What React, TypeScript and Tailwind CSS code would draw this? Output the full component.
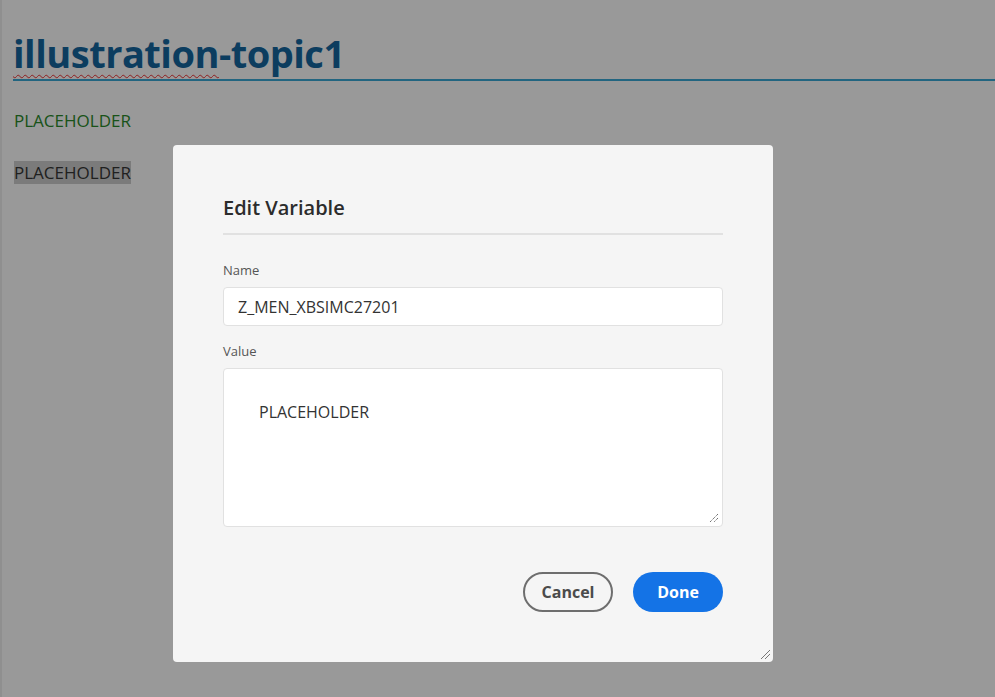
import React from 'react'

export default function App() {
  return (
    <div className="relative h-[697px] w-[995px] overflow-hidden bg-white font-['Open_Sans',sans-serif]">
      {/* document behind the dialog */}
      <div className="h-full border-l-2 border-[#eeeeee] pl-[11px] pt-[29px]">
        <h1 className="border-b-2 border-[#3aa9d6] pb-[2px] text-[38px] font-bold leading-[48px] tracking-[-0.5px] text-[#14679f]">
          <span className="underline decoration-[#e33] decoration-wavy decoration-1 underline-offset-[6px]">illustration</span>-topic1
        </h1>
        <p className="ml-[1px] mt-[28px] text-[17px] leading-[24px] text-[#2b8a2b]">PLACEHOLDER</p>
        <p className="ml-[1px] mt-[28px] text-[17px] leading-[24px] text-[#363636]">
          <span className="bg-[#cdcdcd]">PLACEHOLDER</span>
        </p>
      </div>

      {/* overlay */}
      <div className="absolute inset-0 bg-black/40" />

      {/* dialog */}
      <div className="absolute left-[173px] top-[145px] flex h-[517px] w-[600px] flex-col rounded-[4px] bg-[#f5f5f5] px-[50px] pt-[50px] font-['Open_Sans',sans-serif]">
        <h2 className="border-b-2 border-[#e1e1e1] pb-[12px] text-[20px] font-semibold leading-[26px] text-[#2c2c2c]">Edit Variable</h2>
        <label className="mt-[26px] text-[13px] leading-[18px] text-[#555]">Name</label>
        <div className="mt-[8px] flex h-[39px] items-center rounded-[4px] border border-[#e1e1e1] bg-white px-[14px] text-[16px] text-[#333]">
          Z_MEN_XBSIMC27201
        </div>
        <label className="mt-[16px] text-[13px] leading-[18px] text-[#555]">Value</label>
        <div className="relative mt-[8px] h-[159px] rounded-[4px] border border-[#e1e1e1] bg-white px-[35px] pt-[32px] text-[16px] leading-[22px] text-[#333]">
          PLACEHOLDER
          <svg className="absolute bottom-[3px] right-[3px]" width="10" height="10" viewBox="0 0 10 10">
            <path d="M9 1 L1 9 M9 5 L5 9" stroke="#555" strokeWidth="1" strokeDasharray="1.2 0.8" />
          </svg>
        </div>
        <div className="mt-[45px] flex justify-end gap-[20px]">
          <button className="h-[40px] w-[90px] rounded-full border-2 border-[#6e6e6e] text-[16px] font-bold text-[#4b4b4b]">Cancel</button>
          <button className="h-[40px] w-[90px] rounded-full bg-[#1473e6] text-[16px] font-bold text-white">Done</button>
        </div>
        <svg className="absolute bottom-[2px] right-[2px]" width="12" height="12" viewBox="0 0 12 12">
          <path d="M11 2 L2 11 M11 6 L6 11" stroke="#777" strokeWidth="1" />
        </svg>
      </div>
    </div>
  )
}
